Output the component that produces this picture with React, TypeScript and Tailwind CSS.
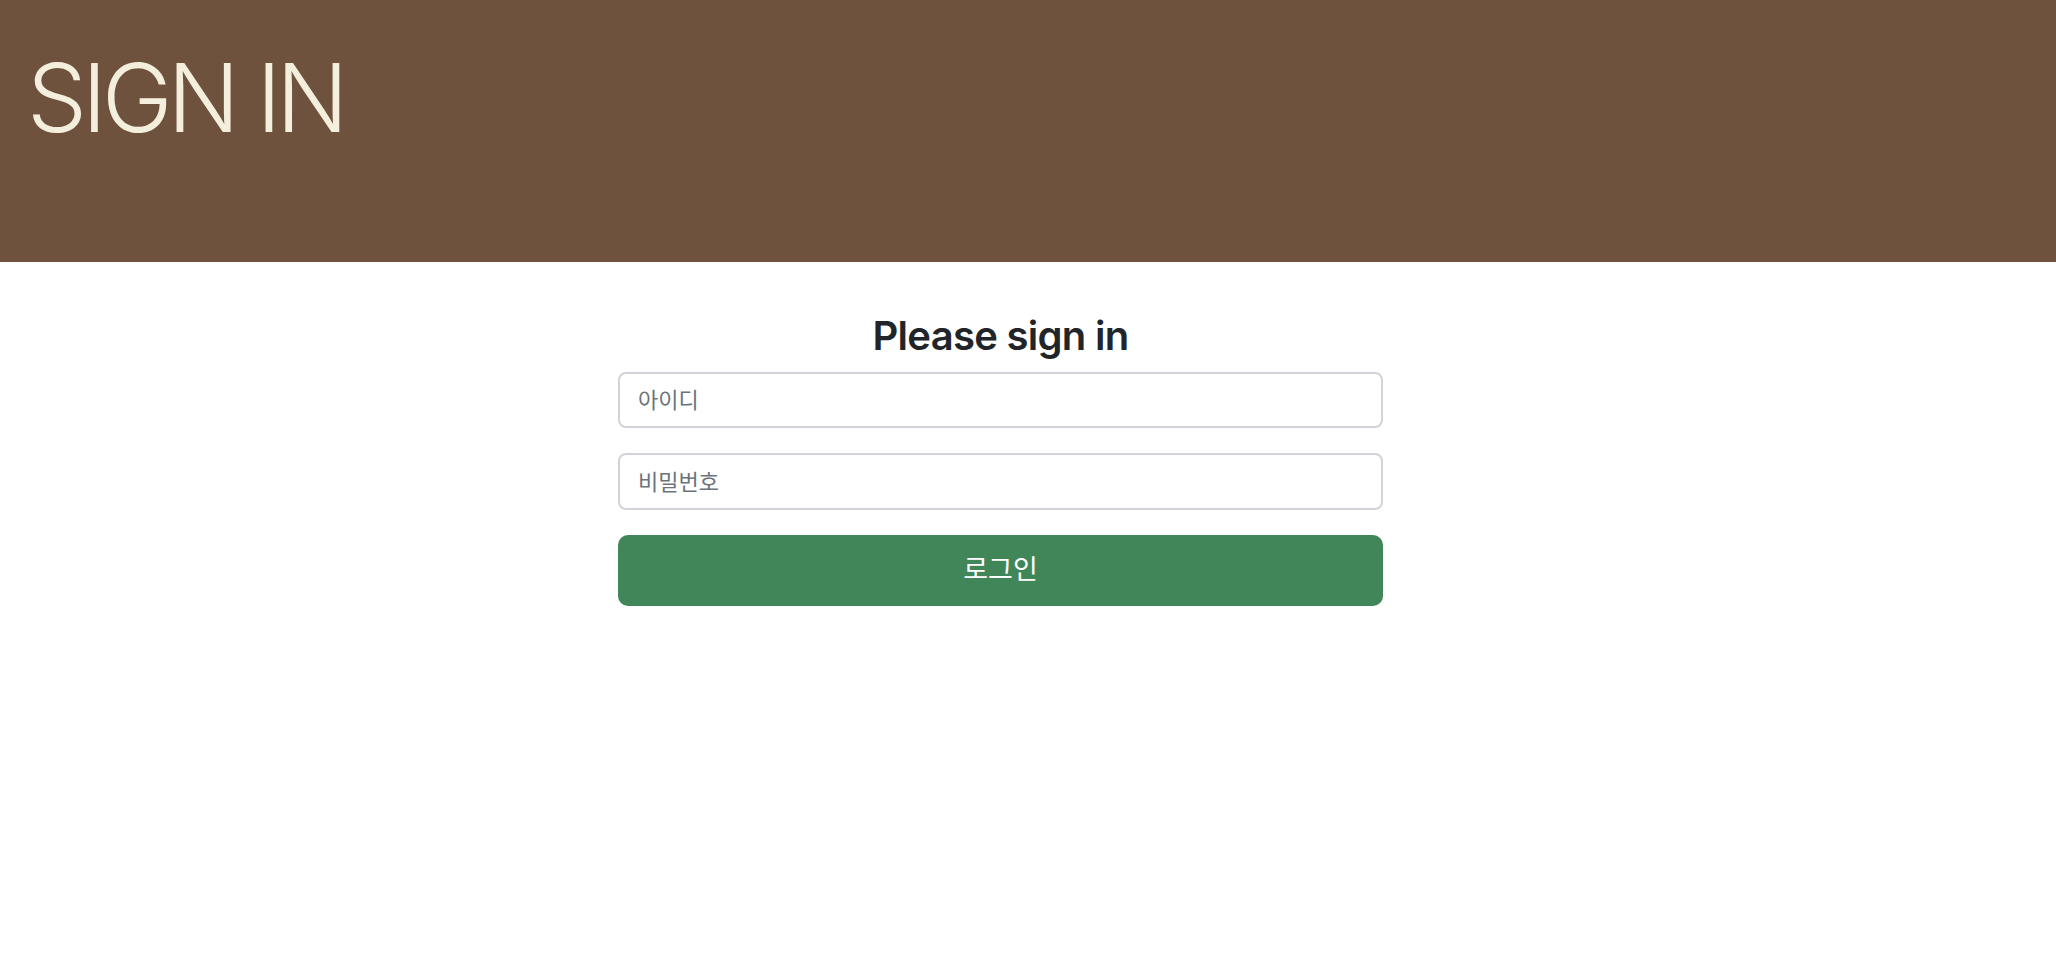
export default function App() {
  return (
    <div className="min-h-screen bg-white" style={{ fontFamily: "Inter, 'Noto Sans CJK KR', sans-serif" }}>
      <header className="h-[262px] bg-[#6f523e] pl-[27px] pt-[46px]">
        <h1 className="text-[95px] leading-[1.1] font-light tracking-[-5px] text-[#f4efdc]">SIGN IN</h1>
      </header>

      <main className="pl-[618px] pt-[50px]">
        <form className="w-[765px] flex flex-col" onSubmit={(e) => e.preventDefault()}>
          <h2 className="text-center text-[40px] leading-[1.2] font-semibold tracking-[-0.7px] text-[#212529] mb-[12px]">
            Please sign in
          </h2>
          <input
            type="text"
            placeholder="아이디"
            className="h-[56px] w-full rounded-[8px] border-2 border-[#d0d4da] px-[18px] text-[22px] text-[#212529] placeholder:text-[#6c737b] outline-none"
          />
          <input
            type="password"
            placeholder="비밀번호"
            className="mt-[25px] h-[57px] w-full rounded-[8px] border-2 border-[#d0d4da] px-[18px] text-[22px] text-[#212529] placeholder:text-[#6c737b] outline-none"
          />
          <button
            type="submit"
            className="mt-[25px] h-[71px] w-full rounded-[10px] bg-[#418659] text-[27px] text-white"
          >
            로그인
          </button>
        </form>
      </main>
    </div>
  )
}
